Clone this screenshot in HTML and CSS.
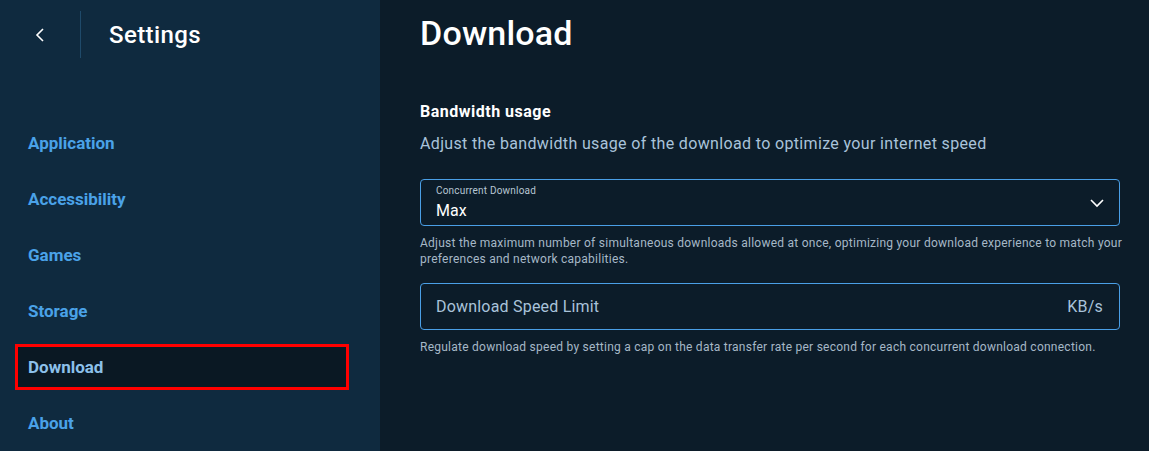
FILE: index.html
```html
<!DOCTYPE html>
<html>
<head>
<meta charset="utf-8">
<link rel="stylesheet" href="styles.css">
</head>
<body>
<div class="app">
  <aside class="sidebar">
    <div class="sidebar-head">
      <button class="back" aria-label="Back">
        <svg width="12" height="16" viewBox="0 0 12 16"><path d="M9 2 L3 8 L9 14" fill="none" stroke="#ffffff" stroke-width="1.6"/></svg>
      </button>
      <div class="divider"></div>
      <h1 class="sidebar-title">Settings</h1>
    </div>
    <nav class="nav">
      <a class="nav-item">Application</a>
      <a class="nav-item">Accessibility</a>
      <a class="nav-item">Games</a>
      <a class="nav-item">Storage</a>
      <a class="nav-item active">Download</a>
      <a class="nav-item">About</a>
    </nav>
  </aside>
  <main class="main">
    <h2 class="page-title">Download</h2>
    <section class="section">
      <h3 class="section-title">Bandwidth usage</h3>
      <p class="section-desc">Adjust the bandwidth usage of the download to optimize your internet speed</p>
      <div class="field select">
        <div class="field-body">
          <span class="field-label">Concurrent Download</span>
          <span class="field-value">Max</span>
        </div>
        <svg class="chev" width="16" height="10" viewBox="0 0 16 10"><path d="M2 2 L8 8 L14 2" fill="none" stroke="#ffffff" stroke-width="1.6"/></svg>
      </div>
      <p class="helper">Adjust the maximum number of simultaneous downloads allowed at once, optimizing your download experience to match your preferences and network capabilities.</p>
      <div class="field input">
        <span class="placeholder">Download Speed Limit</span>
        <span class="unit">KB/s</span>
      </div>
      <p class="helper">Regulate download speed by setting a cap on the data transfer rate per second for each concurrent download connection.</p>
    </section>
  </main>
</div>
</body>
</html>
```
FILE: styles.css
```css
* { box-sizing: border-box; }
html, body { margin: 0; padding: 0; }
body {
  background: #0c1c29;
  font-family: Roboto, "Noto Sans", sans-serif;
  color: #ffffff;
  width: 1149px;
  height: 451px;
  overflow: hidden;
}
.app { display: flex; height: 451px; }
.sidebar {
  width: 380px;
  flex: none;
  background: #0f2a3f;
  display: flex;
  flex-direction: column;
}
.sidebar-head {
  height: 70px;
  display: flex;
  align-items: center;
  padding-left: 28px;
}
.back {
  width: 24px;
  height: 24px;
  padding: 0;
  border: 0;
  background: none;
  display: flex;
  align-items: center;
  justify-content: center;
}
.divider {
  width: 1px;
  height: 47px;
  background: #1f4a6a;
  margin-left: 28px;
  margin-top: -1px;
}
.sidebar-title {
  margin: 0 0 0 28px;
  font-size: 24px;
  font-weight: 500;
  letter-spacing: 0.4px;
}
.nav {
  display: flex;
  flex-direction: column;
  gap: 16px;
  margin-top: 53px;
  padding: 0 34px 0 18px;
}
.nav-item {
  height: 40px;
  display: flex;
  align-items: center;
  padding-left: 10px;
  font-size: 17px;
  font-weight: 700;
  color: #4aa2e8;
}
.nav-item.active {
  background: #0a1823;
  color: #8cc0ea;
  outline: 3px solid #ff0000;
  outline-offset: 0;
}
.main {
  flex: 1;
  padding: 14px 29px 0 40px;
}
.page-title {
  margin: 0;
  font-size: 34px;
  font-weight: 500;
  line-height: 38px;
  letter-spacing: 0.2px;
}
.section { margin-top: 50px; }
.section-title {
  margin: 0;
  font-size: 16px;
  font-weight: 700;
  line-height: 20px;
  letter-spacing: 0.5px;
}
.section-desc {
  margin: 11px 0 0;
  font-size: 16px;
  line-height: 22px;
  color: #a9c3da;
  letter-spacing: 0.35px;
}
.field {
  border: 1px solid #4a9fe6;
  border-radius: 4px;
  height: 47px;
  display: flex;
  align-items: center;
  padding: 0 16px 0 15px;
}
.select { margin-top: 24px; }
.field-body {
  flex: 1;
  display: flex;
  flex-direction: column;
}
.field-label {
  font-size: 10px;
  color: #b7c6d3;
  line-height: 14px;
  letter-spacing: 0.2px;
}
.field-value {
  font-size: 16px;
  line-height: 20px;
  margin-top: 3px;
}
.chev { margin-right: -2px; }
.helper {
  margin: 9px -8px 0 0;
  font-size: 12px;
  line-height: 16px;
  color: #a6b8c7;
  letter-spacing: 0.25px;
}
.input {
  margin-top: 16px;
  justify-content: space-between;
}
.placeholder, .unit {
  font-size: 16px;
  color: #a9c3da;
  letter-spacing: 0.2px;
}
```
